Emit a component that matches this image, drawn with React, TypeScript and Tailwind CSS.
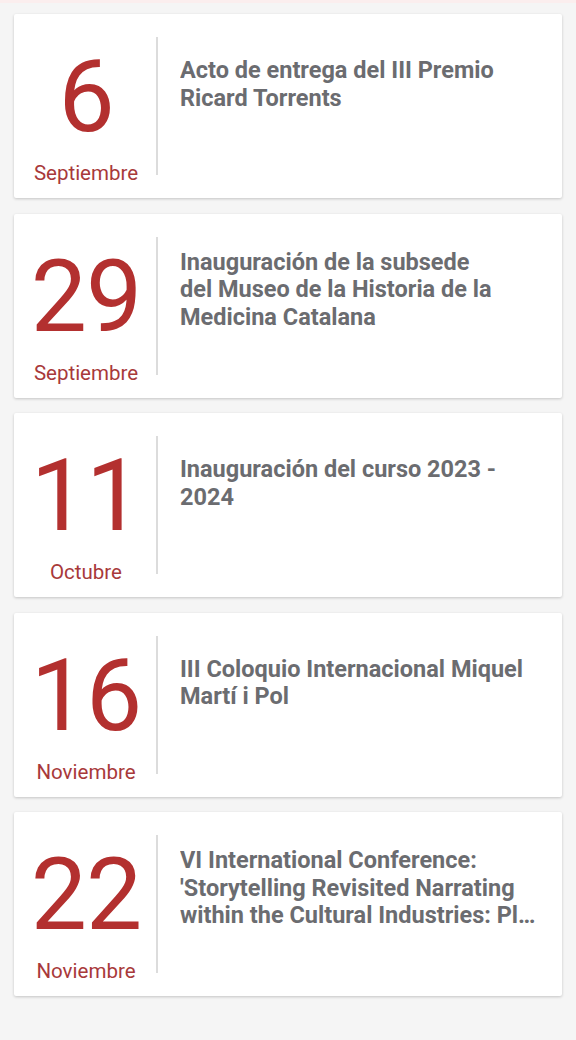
const events = [
  { day: '6', month: 'Septiembre', lines: ['Acto de entrega del III Premio', 'Ricard Torrents'] },
  {
    day: '29',
    month: 'Septiembre',
    lines: ['Inauguración de la subsede', 'del Museo de la Historia de la', 'Medicina Catalana'],
  },
  { day: '11', month: 'Octubre', lines: ['Inauguración del curso 2023 -', '2024'] },
  { day: '16', month: 'Noviembre', lines: ['III Coloquio Internacional Miquel', 'Martí i Pol'] },
  {
    day: '22',
    month: 'Noviembre',
    lines: [
      'VI International Conference:',
      "'Storytelling Revisited Narrating",
      "within the Cultural Industries: Platforms, Audiences and Digital Media'",
    ],
  },
];

function EventCard({ day, month, lines }: { day: string; month: string; lines: string[] }) {
  return (
    <div className="flex h-[184px] bg-white pl-[14px] pr-[21px] rounded-[2px] shadow-[0_1px_3px_rgba(0,0,0,0.2)]">
      {/* Date */}
      <div className="w-[116px] shrink-0 flex flex-col items-center pt-[33px]">
        <span className="text-[100px] leading-none text-[#b3302f] tracking-[-1px]">{day}</span>
        <span className="mt-[14px] text-[20.5px] leading-[24px] text-[#a8393a]">{month}</span>
      </div>

      {/* Divider */}
      <div className="ml-[12px] w-[2px] my-[23px] bg-[#dcdcdc] shrink-0" />

      {/* Title — three-line titles sit a little higher */}
      <div
        className={`ml-[22px] flex-1 min-w-0 text-[23.5px] leading-[27.5px] font-bold text-[#6b6c70] ${
          lines.length > 2 ? 'pt-[35px]' : 'pt-[43px]'
        }`}
      >
        {lines.map((line) => (
          <span key={line} className="block truncate">
            {line}
          </span>
        ))}
      </div>
    </div>
  );
}

export default function App() {
  return (
    <div className="min-h-[1040px] bg-[#f5f5f5] font-['Roboto',sans-serif]">
      <div className="h-[3px] bg-[#fbeeee]" />
      <div className="flex flex-col gap-[15.5px] px-[14px] pt-[11px] pb-[40px]">
        {events.map((e) => (
          <EventCard key={e.day + e.month} {...e} />
        ))}
      </div>
    </div>
  );
}
